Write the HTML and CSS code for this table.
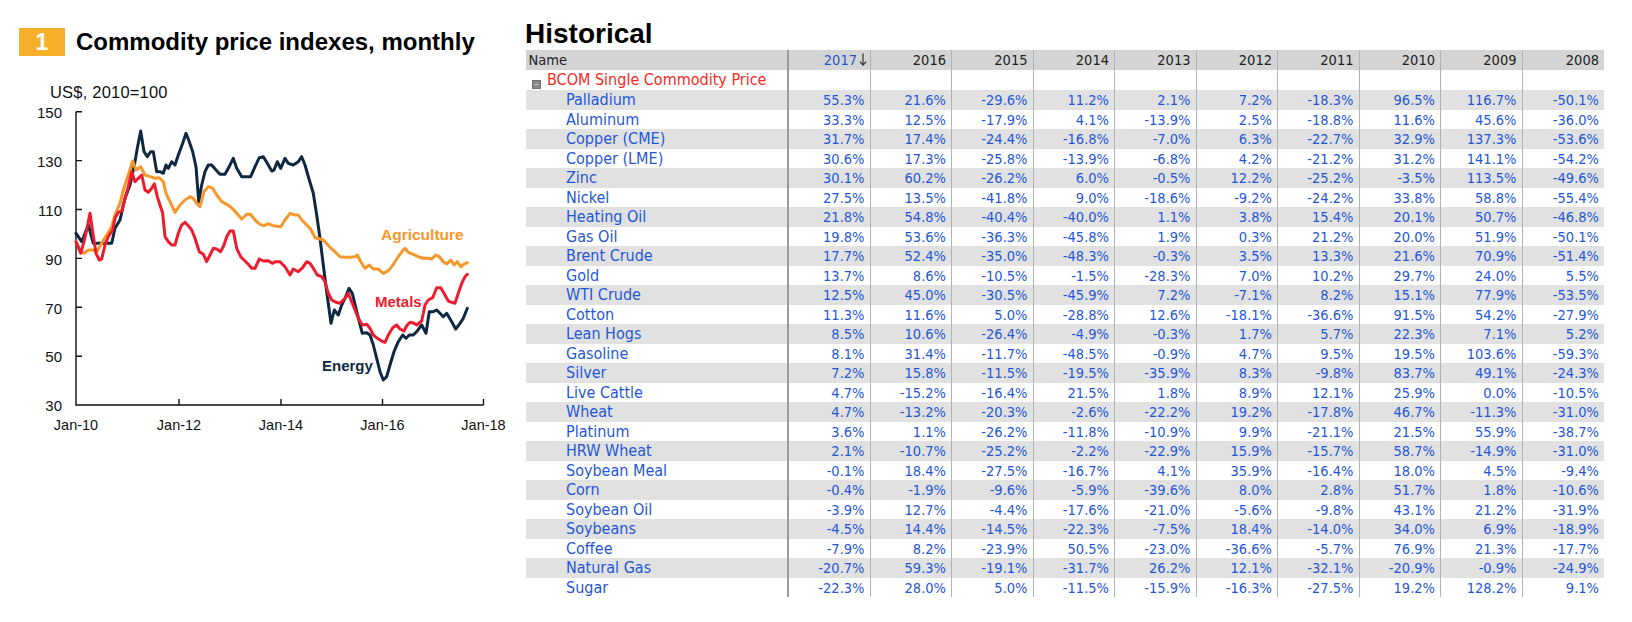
FILE: index.html
```html
<!DOCTYPE html>
<html lang="en">
<head>
<meta charset="utf-8">
<title>Commodity price indexes</title>
<link rel="stylesheet" href="styles.css">
</head>
<body>
<div class="page">
  <section class="left">
    <div class="title-row"><span class="badge">1</span><h1 class="title">Commodity price indexes, monthly</h1></div>
    <div class="units">US$, 2010=100</div>
    <svg class="chart" width="526" height="340" viewBox="0 101 526 340" xmlns="http://www.w3.org/2000/svg">
      <g class="axis" fill="none" stroke="#111" stroke-width="1.4">
        <path d="M76 111.7 V405 H483.5"/>
        <path d="M76 111.7 h6 M76 160.6 h6 M76 209.5 h6 M76 258.4 h6 M76 307.3 h6 M76 356.2 h6"/>
        <path d="M179 405 v-6 M281 405 v-6 M382.5 405 v-6 M483.5 405 v-6"/>
      </g>
      <g class="ylab" text-anchor="end">
        <text x="62" y="118">150</text>
        <text x="62" y="166.8">130</text>
        <text x="62" y="215.7">110</text>
        <text x="62" y="264.6">90</text>
        <text x="62" y="313.5">70</text>
        <text x="62" y="362.4">50</text>
        <text x="62" y="411.2">30</text>
      </g>
      <g class="xlab" text-anchor="middle">
        <text x="76" y="429.5">Jan-10</text>
        <text x="179" y="429.5">Jan-12</text>
        <text x="281" y="429.5">Jan-14</text>
        <text x="382.5" y="429.5">Jan-16</text>
        <text x="483.5" y="429.5">Jan-18</text>
      </g>
      <polyline class="ln energy" points="76,233.3 81.7,241.7 88.3,225 93.3,243.3 111.7,243.3 115,228.3 120,220 125,198.3 130,185 135,161.7 137.3,148.3 140.7,131 144,151.7 147.3,156.7 150.7,151.7 153.3,151.7 156.7,171.7 160,171.7 163.3,173.3 166,165 168.3,168.3 171.7,161.7 175,165 178.3,155 182.7,143.3 186,133.3 189.3,141.7 192.7,151.7 196,166.7 198.7,201.7 201.7,185 205,171.7 208.3,165 211.7,165 216,170 220,174.3 225,174.3 228.3,168.3 233.3,158.3 236.7,168.3 241.7,176.7 246.7,176.7 250.7,176.7 255,166.7 259.3,157.7 263.3,156.7 267.3,163.3 271.7,171 274,170 277.3,161.7 280.7,168.3 285,158.3 288.3,163.3 293.3,165 298.3,161.7 301.7,156.7 305,165 309.3,180 313.3,193.3 316.7,215 320,238.3 323.3,265 326.7,291.7 331,323.3 334.3,310 338.3,315 341.7,305 345,298.3 349,288.3 352.3,293.3 356,308.3 359.3,321.7 362.3,333.3 366.7,332.7 370,335 373.3,345 376.7,358.3 380,371.7 383.3,380 386.7,376.7 390,365 394,351.7 398.3,341.7 402.7,335 406,338.3 409.3,335 413.3,335 416.7,331.7 421.7,325 426,333.3 429.3,311.7 433.3,311.7 436.7,310 440,313.3 443.3,316.7 446.7,313.3 451.7,321.7 455.7,329 460,323.3 463.3,318.3 467.3,308.3"/>
      <polyline class="ln agri" points="76,241.7 80,250 84,253.3 88.3,250 92.7,250 96.7,251.7 101.7,243.3 106.7,235 111.7,226.7 115,215 120,203.3 123.3,190 128.3,175 132.7,161 136,170 140.7,166.7 145,175 150,176.7 155,178.3 159.3,177.7 163.3,181.7 166,193.3 170,201.7 175,212.3 180,205 185,200 190,196.7 193.3,198.3 196.7,203.3 200,206.7 204,191.7 208.3,186.7 212.7,188.3 216.7,195 221.7,201.7 226.7,204.3 231.7,207.7 236.7,213.3 241.7,219 246.7,214.3 250.7,214.3 255,220 260,224.3 264,225.7 268.3,223.7 273.3,225.7 280.7,226.7 285,220 290,213.3 295,215 298.3,215 301.7,220 306.7,225 310.7,229 315,237.7 320,239 323.3,240 327.3,244.3 331.7,249 335,251.7 340,256.7 345,257.3 350,257.3 355,256.7 357.3,255 360.7,261.7 365,268.3 369.3,265 373.3,269 378.3,269 383.3,273.3 386.7,271.7 390,269 394,263.3 398.3,256.7 402.7,250.7 405,248.3 408.3,252.3 413.3,254.3 418.3,256.7 423.3,258.3 428.3,258.3 431.7,259 435.7,255 439.3,256.7 443.3,261.7 446.7,264 450.7,260 454,265 457.3,261.7 460.7,266.7 464,264.3 467.3,262.7"/>
      <polyline class="ln metals" points="76,241.7 80.7,253.3 84,241.7 86.7,230 90,213.3 92.7,231.7 96,253.3 99.3,260 101.7,259 105,245 108.3,236.7 112.7,230 115,218.3 118.3,212.3 121.7,211 125,198.3 128.3,186.7 131.7,171.7 135,181.7 138.3,178.3 141.7,175 145,190 148.3,192.3 151.7,188.3 154.3,183.7 157.3,196.7 160,205 162.7,213.3 165,236.7 168.3,241.7 171.7,245 175,245 178.3,233.3 181.7,225 185,222.3 188.3,225.7 191.7,230 195,238.3 199.3,251.7 203.3,254.3 206.7,261.7 210,255 213.3,248.3 216.7,249 220.7,251.7 224,245 226.7,236.7 230,231 233.3,231 236.7,248.3 240.7,256.7 245,261 248.3,264.3 251.7,268.3 255,268.3 259.3,259 263.3,261 268.3,260.7 272.3,263.3 275.7,261.7 280,261.7 285,266.7 290,275 293.3,269 298.3,271.7 302.7,267.7 306.7,261.7 310,263.3 313.3,268.3 317.3,275 321.7,276.7 325,281.7 328.3,293.3 331.7,300 336,302.3 340,303.3 345,298.3 348.3,293.3 351.7,301.7 355,310 358.3,318.3 362.3,325 366.7,324.3 370,328.3 373.3,335 377.3,338.3 381.7,341 385,342.3 388.3,335 392.7,327.7 396.7,325 400,329 404,331 406.7,325.7 410,322.3 414,323.3 416.7,325 421.7,321 425,305 428.3,300 432.7,297.7 436.7,287.7 440.7,287.7 444,293.3 448.3,301 451.7,302.3 455,303.3 458.3,293.3 461.7,283.3 465,276.7 467.3,274.3"/>
      <text class="slab agri-t" x="381" y="239.5">Agriculture</text>
      <text class="slab metals-t" x="375" y="306.5">Metals</text>
      <text class="slab energy-t" x="322" y="371">Energy</text>
    </svg>
  </section>

  <section class="right">
    <h2 class="hist">Historical</h2>
    <div class="tbl">
      <div class="row hdr"><div class="c name">Name</div><div class="c sort">2017<svg class="arrow" width="8" height="13" viewBox="0 0 8 13"><path d="M4 0.5 V12 M0.8 8.6 L4 12 L7.2 8.6" fill="none" stroke="#333" stroke-width="1.2"/></svg></div><div class="c">2016</div><div class="c">2015</div><div class="c">2014</div><div class="c">2013</div><div class="c">2012</div><div class="c">2011</div><div class="c">2010</div><div class="c">2009</div><div class="c">2008</div></div>
      <div class="row grp"><div class="c name"><span class="tog"></span>BCOM Single Commodity Price</div><div class="c"></div><div class="c"></div><div class="c"></div><div class="c"></div><div class="c"></div><div class="c"></div><div class="c"></div><div class="c"></div><div class="c"></div><div class="c"></div></div>
      <div class="row alt"><div class="c name">Palladium</div><div class="c">55.3%</div><div class="c">21.6%</div><div class="c">-29.6%</div><div class="c">11.2%</div><div class="c">2.1%</div><div class="c">7.2%</div><div class="c">-18.3%</div><div class="c">96.5%</div><div class="c">116.7%</div><div class="c">-50.1%</div></div>
      <div class="row"><div class="c name">Aluminum</div><div class="c">33.3%</div><div class="c">12.5%</div><div class="c">-17.9%</div><div class="c">4.1%</div><div class="c">-13.9%</div><div class="c">2.5%</div><div class="c">-18.8%</div><div class="c">11.6%</div><div class="c">45.6%</div><div class="c">-36.0%</div></div>
      <div class="row alt"><div class="c name">Copper (CME)</div><div class="c">31.7%</div><div class="c">17.4%</div><div class="c">-24.4%</div><div class="c">-16.8%</div><div class="c">-7.0%</div><div class="c">6.3%</div><div class="c">-22.7%</div><div class="c">32.9%</div><div class="c">137.3%</div><div class="c">-53.6%</div></div>
      <div class="row"><div class="c name">Copper (LME)</div><div class="c">30.6%</div><div class="c">17.3%</div><div class="c">-25.8%</div><div class="c">-13.9%</div><div class="c">-6.8%</div><div class="c">4.2%</div><div class="c">-21.2%</div><div class="c">31.2%</div><div class="c">141.1%</div><div class="c">-54.2%</div></div>
      <div class="row alt"><div class="c name">Zinc</div><div class="c">30.1%</div><div class="c">60.2%</div><div class="c">-26.2%</div><div class="c">6.0%</div><div class="c">-0.5%</div><div class="c">12.2%</div><div class="c">-25.2%</div><div class="c">-3.5%</div><div class="c">113.5%</div><div class="c">-49.6%</div></div>
      <div class="row"><div class="c name">Nickel</div><div class="c">27.5%</div><div class="c">13.5%</div><div class="c">-41.8%</div><div class="c">9.0%</div><div class="c">-18.6%</div><div class="c">-9.2%</div><div class="c">-24.2%</div><div class="c">33.8%</div><div class="c">58.8%</div><div class="c">-55.4%</div></div>
      <div class="row alt"><div class="c name">Heating Oil</div><div class="c">21.8%</div><div class="c">54.8%</div><div class="c">-40.4%</div><div class="c">-40.0%</div><div class="c">1.1%</div><div class="c">3.8%</div><div class="c">15.4%</div><div class="c">20.1%</div><div class="c">50.7%</div><div class="c">-46.8%</div></div>
      <div class="row"><div class="c name">Gas Oil</div><div class="c">19.8%</div><div class="c">53.6%</div><div class="c">-36.3%</div><div class="c">-45.8%</div><div class="c">1.9%</div><div class="c">0.3%</div><div class="c">21.2%</div><div class="c">20.0%</div><div class="c">51.9%</div><div class="c">-50.1%</div></div>
      <div class="row alt"><div class="c name">Brent Crude</div><div class="c">17.7%</div><div class="c">52.4%</div><div class="c">-35.0%</div><div class="c">-48.3%</div><div class="c">-0.3%</div><div class="c">3.5%</div><div class="c">13.3%</div><div class="c">21.6%</div><div class="c">70.9%</div><div class="c">-51.4%</div></div>
      <div class="row"><div class="c name">Gold</div><div class="c">13.7%</div><div class="c">8.6%</div><div class="c">-10.5%</div><div class="c">-1.5%</div><div class="c">-28.3%</div><div class="c">7.0%</div><div class="c">10.2%</div><div class="c">29.7%</div><div class="c">24.0%</div><div class="c">5.5%</div></div>
      <div class="row alt"><div class="c name">WTI Crude</div><div class="c">12.5%</div><div class="c">45.0%</div><div class="c">-30.5%</div><div class="c">-45.9%</div><div class="c">7.2%</div><div class="c">-7.1%</div><div class="c">8.2%</div><div class="c">15.1%</div><div class="c">77.9%</div><div class="c">-53.5%</div></div>
      <div class="row"><div class="c name">Cotton</div><div class="c">11.3%</div><div class="c">11.6%</div><div class="c">5.0%</div><div class="c">-28.8%</div><div class="c">12.6%</div><div class="c">-18.1%</div><div class="c">-36.6%</div><div class="c">91.5%</div><div class="c">54.2%</div><div class="c">-27.9%</div></div>
      <div class="row alt"><div class="c name">Lean Hogs</div><div class="c">8.5%</div><div class="c">10.6%</div><div class="c">-26.4%</div><div class="c">-4.9%</div><div class="c">-0.3%</div><div class="c">1.7%</div><div class="c">5.7%</div><div class="c">22.3%</div><div class="c">7.1%</div><div class="c">5.2%</div></div>
      <div class="row"><div class="c name">Gasoline</div><div class="c">8.1%</div><div class="c">31.4%</div><div class="c">-11.7%</div><div class="c">-48.5%</div><div class="c">-0.9%</div><div class="c">4.7%</div><div class="c">9.5%</div><div class="c">19.5%</div><div class="c">103.6%</div><div class="c">-59.3%</div></div>
      <div class="row alt"><div class="c name">Silver</div><div class="c">7.2%</div><div class="c">15.8%</div><div class="c">-11.5%</div><div class="c">-19.5%</div><div class="c">-35.9%</div><div class="c">8.3%</div><div class="c">-9.8%</div><div class="c">83.7%</div><div class="c">49.1%</div><div class="c">-24.3%</div></div>
      <div class="row"><div class="c name">Live Cattle</div><div class="c">4.7%</div><div class="c">-15.2%</div><div class="c">-16.4%</div><div class="c">21.5%</div><div class="c">1.8%</div><div class="c">8.9%</div><div class="c">12.1%</div><div class="c">25.9%</div><div class="c">0.0%</div><div class="c">-10.5%</div></div>
      <div class="row alt"><div class="c name">Wheat</div><div class="c">4.7%</div><div class="c">-13.2%</div><div class="c">-20.3%</div><div class="c">-2.6%</div><div class="c">-22.2%</div><div class="c">19.2%</div><div class="c">-17.8%</div><div class="c">46.7%</div><div class="c">-11.3%</div><div class="c">-31.0%</div></div>
      <div class="row"><div class="c name">Platinum</div><div class="c">3.6%</div><div class="c">1.1%</div><div class="c">-26.2%</div><div class="c">-11.8%</div><div class="c">-10.9%</div><div class="c">9.9%</div><div class="c">-21.1%</div><div class="c">21.5%</div><div class="c">55.9%</div><div class="c">-38.7%</div></div>
      <div class="row alt"><div class="c name">HRW Wheat</div><div class="c">2.1%</div><div class="c">-10.7%</div><div class="c">-25.2%</div><div class="c">-2.2%</div><div class="c">-22.9%</div><div class="c">15.9%</div><div class="c">-15.7%</div><div class="c">58.7%</div><div class="c">-14.9%</div><div class="c">-31.0%</div></div>
      <div class="row"><div class="c name">Soybean Meal</div><div class="c">-0.1%</div><div class="c">18.4%</div><div class="c">-27.5%</div><div class="c">-16.7%</div><div class="c">4.1%</div><div class="c">35.9%</div><div class="c">-16.4%</div><div class="c">18.0%</div><div class="c">4.5%</div><div class="c">-9.4%</div></div>
      <div class="row alt"><div class="c name">Corn</div><div class="c">-0.4%</div><div class="c">-1.9%</div><div class="c">-9.6%</div><div class="c">-5.9%</div><div class="c">-39.6%</div><div class="c">8.0%</div><div class="c">2.8%</div><div class="c">51.7%</div><div class="c">1.8%</div><div class="c">-10.6%</div></div>
      <div class="row"><div class="c name">Soybean Oil</div><div class="c">-3.9%</div><div class="c">12.7%</div><div class="c">-4.4%</div><div class="c">-17.6%</div><div class="c">-21.0%</div><div class="c">-5.6%</div><div class="c">-9.8%</div><div class="c">43.1%</div><div class="c">21.2%</div><div class="c">-31.9%</div></div>
      <div class="row alt"><div class="c name">Soybeans</div><div class="c">-4.5%</div><div class="c">14.4%</div><div class="c">-14.5%</div><div class="c">-22.3%</div><div class="c">-7.5%</div><div class="c">18.4%</div><div class="c">-14.0%</div><div class="c">34.0%</div><div class="c">6.9%</div><div class="c">-18.9%</div></div>
      <div class="row"><div class="c name">Coffee</div><div class="c">-7.9%</div><div class="c">8.2%</div><div class="c">-23.9%</div><div class="c">50.5%</div><div class="c">-23.0%</div><div class="c">-36.6%</div><div class="c">-5.7%</div><div class="c">76.9%</div><div class="c">21.3%</div><div class="c">-17.7%</div></div>
      <div class="row alt"><div class="c name">Natural Gas</div><div class="c">-20.7%</div><div class="c">59.3%</div><div class="c">-19.1%</div><div class="c">-31.7%</div><div class="c">26.2%</div><div class="c">12.1%</div><div class="c">-32.1%</div><div class="c">-20.9%</div><div class="c">-0.9%</div><div class="c">-24.9%</div></div>
      <div class="row"><div class="c name">Sugar</div><div class="c">-22.3%</div><div class="c">28.0%</div><div class="c">5.0%</div><div class="c">-11.5%</div><div class="c">-15.9%</div><div class="c">-16.3%</div><div class="c">-27.5%</div><div class="c">19.2%</div><div class="c">128.2%</div><div class="c">9.1%</div></div>
    </div>
  </section>
</div>
</body>
</html>
```

FILE: styles.css
```css
html, body {
  margin: 0;
  padding: 0;
  background: #fff;
}

body {
  width: 1632px;
  height: 622px;
  overflow: hidden;
}

.page {
  display: flex;
  align-items: flex-start;
}

/* ---------- Left: chart panel ---------- */
.left {
  flex: none;
  width: 526px;
  font-family: "Liberation Sans", Arial, sans-serif;
  color: #111;
}

.title-row {
  display: flex;
  align-items: center;
  gap: 11px;
  height: 28px;
  margin: 28px 0 0 19px;
}

.badge {
  flex: none;
  width: 46px;
  height: 28px;
  background: #f5af2b;
  color: #fff;
  font-weight: bold;
  font-size: 23px;
  line-height: 28px;
  text-align: center;
}

.title {
  margin: 0;
  font-size: 24px;
  font-weight: bold;
  line-height: 28px;
  color: #000;
  white-space: nowrap;
}

.units {
  margin: 27px 0 0 50px;
  height: 18px;
  font-size: 16.5px;
  letter-spacing: 0.2px;
  line-height: 18px;
  color: #111;
}

.chart {
  display: block;
}

.chart text {
  font-family: "Liberation Sans", Arial, sans-serif;
}

.ylab text,
.xlab text {
  font-size: 14.5px;
  fill: #111;
}

.ylab text {
  font-size: 15px;
}

.ln {
  fill: none;
  stroke-width: 3;
  stroke-linejoin: round;
  stroke-linecap: round;
}

.energy { stroke: #0e2841; }
.agri { stroke: #f7962a; }
.metals { stroke: #ec1c2e; }

.slab {
  font-weight: bold;
  font-size: 15px;
}

.agri-t { fill: #f7962a; font-size: 15.5px; }
.metals-t { fill: #ec1c2e; }
.energy-t { fill: #0e2841; }

/* ---------- Right: historical table ---------- */
.right {
  flex: none;
}

.hist {
  margin: 18px 0 0 -1px;
  font: bold 28px/32px "Liberation Sans", Arial, sans-serif;
  color: #000;
}

.tbl {
  width: 1078px;
  font-family: "DejaVu Sans Condensed", "DejaVu Sans", sans-serif;
  font-stretch: condensed;
}

.row {
  display: grid;
  grid-template-columns: 263px repeat(10, 81.5px);
  height: 19.5px;
}

.row.hdr,
.row.grp {
  height: 20px;
}

.row.hdr {
  background: #d4d4d4;
}

.row.alt {
  background: #e1e1e1;
}

.c {
  box-sizing: border-box;
  border-right: 1px solid #b2b2b2;
  padding: 1px 5px 0 0;
  font-size: 14.5px;
  line-height: 18px;
  text-align: right;
  color: #1f57d8;
  white-space: nowrap;
  overflow: hidden;
}

.c:last-child {
  border-right: 0;
}

.c.name {
  border-right: 2px solid #9c9c9c;
  padding: 0 0 0 40px;
  font-size: 16px;
  line-height: 19px;
  text-align: left;
}

.hdr .c {
  color: #222;
  padding-top: 1px;
  line-height: 18px;
}

.hdr .c.name {
  padding-left: 2.5px;
  font-size: 14.5px;
}

.hdr .c.sort {
  color: #1f57d8;
  padding-right: 2.5px;
}

.arrow {
  display: inline-block;
  margin-left: 2px;
  vertical-align: -1px;
}

.grp .c.name {
  padding-left: 6px;
  color: #f52b25;
  line-height: 20px;
}

.tog {
  display: inline-flex;
  align-items: center;
  justify-content: center;
  box-sizing: border-box;
  width: 9px;
  height: 9px;
  margin-right: 6px;
  background: #878787;
  border: 1px solid #6f6f6f;
  vertical-align: 0;
}

.tog::after {
  content: "";
  width: 5px;
  height: 1px;
  background: #c4c4c4;
}
```
